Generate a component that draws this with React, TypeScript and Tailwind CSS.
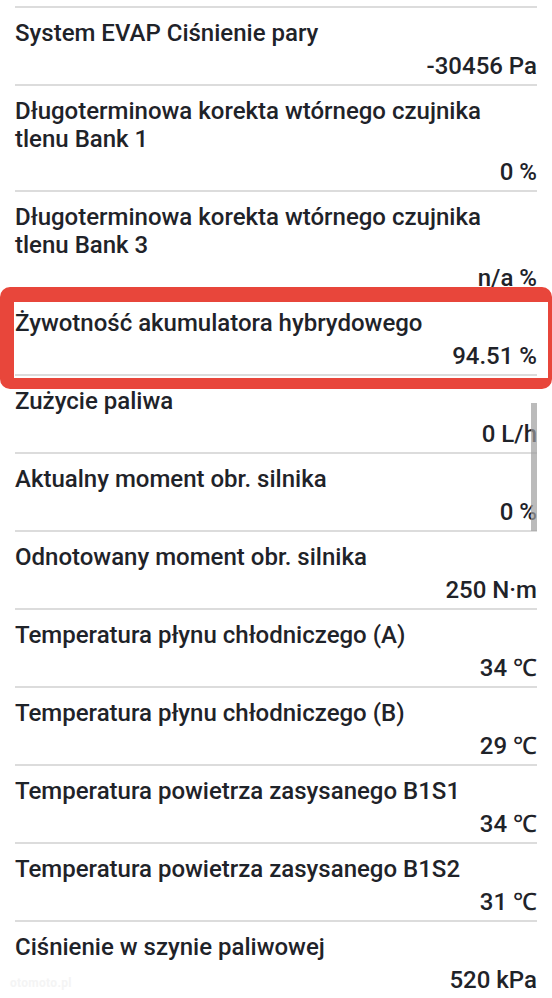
const ROWS = [
  { title: "System EVAP Ciśnienie pary", value: "-30456 Pa" },
  { title: "Długoterminowa korekta wtórnego czujnika tlenu Bank 1", value: "0 %" },
  { title: "Długoterminowa korekta wtórnego czujnika tlenu Bank 3", value: "n/a %" },
  { title: "Żywotność akumulatora hybrydowego", value: "94.51 %" },
  { title: "Zużycie paliwa", value: "0 L/h" },
  { title: "Aktualny moment obr. silnika", value: "0 %" },
  { title: "Odnotowany moment obr. silnika", value: "250 N·m" },
  { title: "Temperatura płynu chłodniczego (A)", value: "34 ℃" },
  { title: "Temperatura płynu chłodniczego (B)", value: "29 ℃" },
  { title: "Temperatura powietrza zasysanego B1S1", value: "34 ℃" },
  { title: "Temperatura powietrza zasysanego B1S2", value: "31 ℃" },
  { title: "Ciśnienie w szynie paliwowej", value: "520 kPa" },
];

function Row({ title, value }: { title: string; value: string }) {
  return (
    <li className="border-t-2 border-[#dcdcdc] pt-[11px] pb-[4px]">
      <p className="text-[24px] leading-[28px]">{title}</p>
      <p className="mt-[5px] text-right text-[24px] leading-[28px]">{value}</p>
    </li>
  );
}

export default function App() {
  return (
    <div
      className="relative h-[998px] w-[552px] overflow-hidden bg-white font-medium text-[#1f2329]"
      style={{ fontFamily: "Roboto, 'Noto Sans', sans-serif" }}
    >
      <ul className="mx-[15px] pt-[6px]">
        {ROWS.map((row) => (
          <Row key={row.title} {...row} />
        ))}
      </ul>

      {/* highlight frame */}
      <div className="pointer-events-none absolute left-0 top-[287px] h-[102px] w-[552px] rounded-[10px] border-t-[15px] border-r-[4px] border-b-[11px] border-l-[14px] border-[#e8463b]" />

      {/* scrollbar */}
      <div className="absolute left-[531px] top-[403px] h-[128px] w-[6px] bg-[#9e9e9e]/70" />

      <span className="absolute left-[10px] top-[974px] text-[12px] font-bold tracking-wide text-[#f4f4f4]">
        otomoto.pl
      </span>
    </div>
  );
}
